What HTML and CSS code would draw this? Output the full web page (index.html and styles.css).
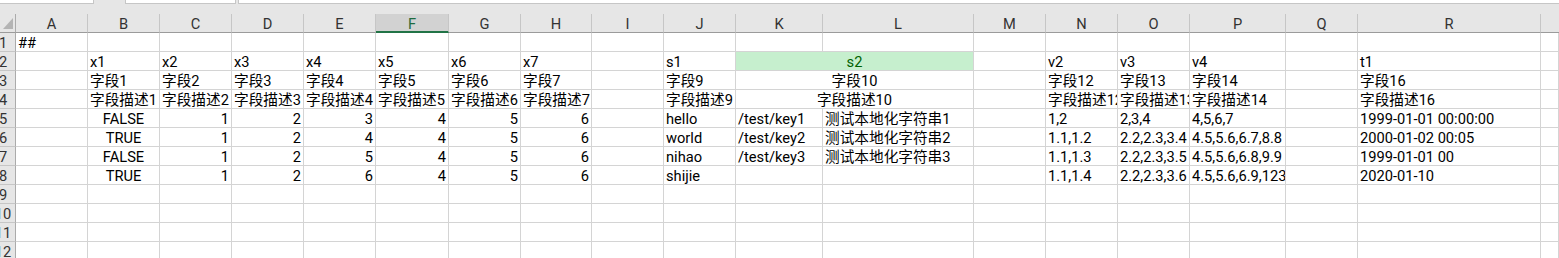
FILE: index.html
```html
<!DOCTYPE html>
<html lang="zh-CN">
<head>
<meta charset="utf-8">
<title>Sheet1</title>
<link rel="stylesheet" href="styles.css">
</head>
<body>
<div class="top">
  <div class="box box-name"></div>
  <div class="box box-func"></div>
  <div class="box box-formula"></div>
</div>
<div class="grid">
  <!-- column headers -->
  <div class="corner"><svg width="16" height="18" viewBox="0 0 16 18"><polygon points="3,15 13,15 13,4" fill="#b4b4b4"/></svg></div>
  <div class="ch">A</div><div class="ch">B</div><div class="ch">C</div><div class="ch">D</div><div class="ch">E</div>
  <div class="ch ch-sel">F</div><div class="ch">G</div><div class="ch">H</div><div class="ch">I</div><div class="ch">J</div>
  <div class="ch">K</div><div class="ch">L</div><div class="ch">M</div><div class="ch">N</div><div class="ch">O</div>
  <div class="ch">P</div><div class="ch">Q</div><div class="ch">R</div><div class="ch ch-last"></div>

  <!-- row 1 -->
  <div class="rh"><span>1</span></div>
  <div class="c">##</div><div class="c"></div><div class="c"></div><div class="c"></div><div class="c"></div>
  <div class="c"></div><div class="c"></div><div class="c"></div><div class="c"></div><div class="c"></div>
  <div class="c"></div><div class="c"></div><div class="c"></div><div class="c"></div><div class="c"></div>
  <div class="c"></div><div class="c"></div><div class="c"></div><div class="c"></div>

  <!-- row 2 -->
  <div class="rh"><span>2</span></div>
  <div class="c"></div><div class="c">x1</div><div class="c">x2</div><div class="c">x3</div><div class="c">x4</div>
  <div class="c">x5</div><div class="c">x6</div><div class="c">x7</div><div class="c"></div><div class="c">s1</div>
  <div class="c m span2 good">s2</div><div class="c"></div><div class="c">v2</div><div class="c">v3</div>
  <div class="c">v4</div><div class="c"></div><div class="c">t1</div><div class="c"></div>

  <!-- row 3 -->
  <div class="rh"><span>3</span></div>
  <div class="c"></div><div class="c">字段1</div><div class="c">字段2</div><div class="c">字段3</div><div class="c">字段4</div>
  <div class="c">字段5</div><div class="c">字段6</div><div class="c">字段7</div><div class="c"></div><div class="c">字段9</div>
  <div class="c m span2">字段10</div><div class="c"></div><div class="c">字段12</div><div class="c">字段13</div>
  <div class="c">字段14</div><div class="c"></div><div class="c">字段16</div><div class="c"></div>

  <!-- row 4 -->
  <div class="rh"><span>4</span></div>
  <div class="c"></div><div class="c">字段描述1</div><div class="c">字段描述2</div><div class="c">字段描述3</div><div class="c">字段描述4</div>
  <div class="c">字段描述5</div><div class="c">字段描述6</div><div class="c">字段描述7</div><div class="c"></div><div class="c">字段描述9</div>
  <div class="c m span2">字段描述10</div><div class="c"></div><div class="c">字段描述12</div><div class="c">字段描述13</div>
  <div class="c">字段描述14</div><div class="c"></div><div class="c">字段描述16</div><div class="c"></div>

  <!-- row 5 -->
  <div class="rh"><span>5</span></div>
  <div class="c"></div><div class="c m">FALSE</div><div class="c r">1</div><div class="c r">2</div><div class="c r">3</div>
  <div class="c r">4</div><div class="c r">5</div><div class="c r">6</div><div class="c"></div><div class="c">hello</div>
  <div class="c">/test/key1</div><div class="c">测试本地化字符串1</div><div class="c"></div><div class="c">1,2</div><div class="c">2,3,4</div>
  <div class="c">4,5,6,7</div><div class="c"></div><div class="c">1999-01-01 00:00:00</div><div class="c"></div>

  <!-- row 6 -->
  <div class="rh"><span>6</span></div>
  <div class="c"></div><div class="c m">TRUE</div><div class="c r">1</div><div class="c r">2</div><div class="c r">4</div>
  <div class="c r">4</div><div class="c r">5</div><div class="c r">6</div><div class="c"></div><div class="c">world</div>
  <div class="c">/test/key2</div><div class="c">测试本地化字符串2</div><div class="c"></div><div class="c">1.1,1.2</div><div class="c">2.2,2.3,3.4</div>
  <div class="c">4.5,5.6,6.7,8.8</div><div class="c"></div><div class="c">2000-01-02 00:05</div><div class="c"></div>

  <!-- row 7 -->
  <div class="rh"><span>7</span></div>
  <div class="c"></div><div class="c m">FALSE</div><div class="c r">1</div><div class="c r">2</div><div class="c r">5</div>
  <div class="c r">4</div><div class="c r">5</div><div class="c r">6</div><div class="c"></div><div class="c">nihao</div>
  <div class="c">/test/key3</div><div class="c">测试本地化字符串3</div><div class="c"></div><div class="c">1.1,1.3</div><div class="c">2.2,2.3,3.5</div>
  <div class="c">4.5,5.6,6.8,9.9</div><div class="c"></div><div class="c">1999-01-01 00</div><div class="c"></div>

  <!-- row 8 -->
  <div class="rh"><span>8</span></div>
  <div class="c"></div><div class="c m">TRUE</div><div class="c r">1</div><div class="c r">2</div><div class="c r">6</div>
  <div class="c r">4</div><div class="c r">5</div><div class="c r">6</div><div class="c"></div><div class="c">shijie</div>
  <div class="c"></div><div class="c"></div><div class="c"></div><div class="c">1.1,1.4</div><div class="c">2.2,2.3,3.6</div>
  <div class="c">4.5,5.6,6.9,123</div><div class="c"></div><div class="c">2020-01-10</div><div class="c"></div>

  <!-- rows 9-12 -->
  <div class="rh"><span>9</span></div>
  <div class="c"></div><div class="c"></div><div class="c"></div><div class="c"></div><div class="c"></div>
  <div class="c"></div><div class="c"></div><div class="c"></div><div class="c"></div><div class="c"></div>
  <div class="c"></div><div class="c"></div><div class="c"></div><div class="c"></div><div class="c"></div>
  <div class="c"></div><div class="c"></div><div class="c"></div><div class="c"></div>

  <div class="rh"><span>10</span></div>
  <div class="c"></div><div class="c"></div><div class="c"></div><div class="c"></div><div class="c"></div>
  <div class="c"></div><div class="c"></div><div class="c"></div><div class="c"></div><div class="c"></div>
  <div class="c"></div><div class="c"></div><div class="c"></div><div class="c"></div><div class="c"></div>
  <div class="c"></div><div class="c"></div><div class="c"></div><div class="c"></div>

  <div class="rh"><span>11</span></div>
  <div class="c"></div><div class="c"></div><div class="c"></div><div class="c"></div><div class="c"></div>
  <div class="c"></div><div class="c"></div><div class="c"></div><div class="c"></div><div class="c"></div>
  <div class="c"></div><div class="c"></div><div class="c"></div><div class="c"></div><div class="c"></div>
  <div class="c"></div><div class="c"></div><div class="c"></div><div class="c"></div>

  <div class="rh"><span>12</span></div>
  <div class="c"></div><div class="c"></div><div class="c"></div><div class="c"></div><div class="c"></div>
  <div class="c"></div><div class="c"></div><div class="c"></div><div class="c"></div><div class="c"></div>
  <div class="c"></div><div class="c"></div><div class="c"></div><div class="c"></div><div class="c"></div>
  <div class="c"></div><div class="c"></div><div class="c"></div><div class="c"></div>
</div>
</body>
</html>
```
FILE: styles.css
```css
html, body {
  margin: 0;
  padding: 0;
  background: #ffffff;
  overflow: hidden;
}

body {
  font-family: Roboto, "Noto Sans CJK SC", sans-serif;
  font-size: 11pt;
  color: #000000;
}

/* strip above the sheet: name box, function buttons, formula bar */
.top {
  height: 14px;
  background: #e6e6e6;
  display: flex;
  align-items: flex-start;
}

.box {
  box-sizing: border-box;
  height: 4px;
  background: #ffffff;
  border: 1px solid #c6c6c6;
  border-top: 0;
}

.box-name {
  width: 94px;
  border-left: 0;
}

.box-func {
  width: 111px;
  margin-left: 31px;
}

.box-formula {
  flex: 1;
  margin-left: 2px;
  border-right: 0;
}

/* worksheet grid */
.grid {
  display: grid;
  grid-template-columns: 16px 72px 72px 72px 72px 72px 73px 72px 71px 72px 72px 87px 151px 72px 72px 72px 96px 72px 183px 1fr;
  grid-auto-rows: 19px;
}

.corner,
.ch,
.rh,
.c {
  box-sizing: border-box;
  white-space: nowrap;
  overflow: hidden;
  padding-top: 2px;
  line-height: 17px;
}

.corner {
  padding: 0;
  background: #e6e6e6;
  border-right: 1px solid #ababab;
  border-bottom: 1px solid #9b9b9b;
}

.corner svg {
  display: block;
}

.ch {
  background: #e6e6e6;
  color: #333333;
  text-align: center;
  border-right: 1px solid #c6c6c6;
  border-bottom: 1px solid #9b9b9b;
}

.ch-sel {
  background: #d2d2d2;
  color: #1e6b3f;
  border-bottom: 2px solid #217346;
}

.ch-last {
  border-right: 0;
}

.rh {
  background: #e6e6e6;
  color: #333333;
  border-right: 1px solid #ababab;
  border-bottom: 1px solid #c6c6c6;
}

/* row numbers are centred in a wider box that the narrow header clips */
.rh span {
  display: block;
  width: 32px;
  margin-left: -13px;
  text-align: center;
}

.c {
  padding-left: 2px;
  padding-right: 2px;
  border-right: 1px solid #d4d4d4;
  border-bottom: 1px solid #d4d4d4;
}

.r {
  text-align: right;
}

.m {
  text-align: center;
}

.span2 {
  grid-column: span 2;
}

.good {
  background: #c6efce;
  color: #006100;
}
```
